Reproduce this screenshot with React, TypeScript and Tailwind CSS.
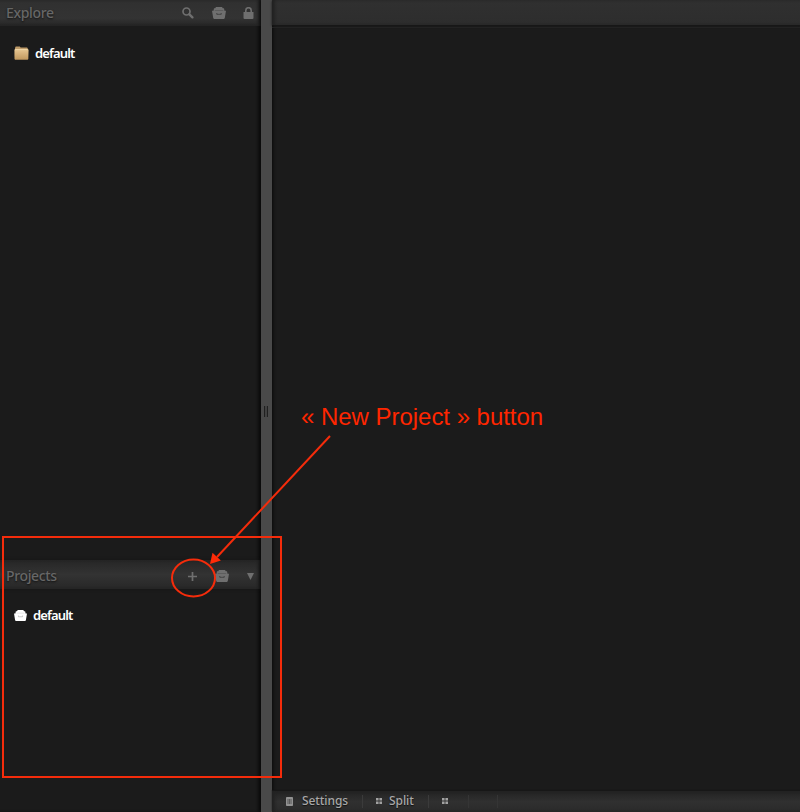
import React from 'react';

const ICON = '#6f6f6f';

function Basket({ color = ICON, line = '#303030', width = 14 }: { color?: string; line?: string; width?: number }) {
  return (
    <svg width={width} height={width * 12 / 14} viewBox="0 0 14 12" className="block shrink-0">
      <path d="M4 0h6l.8 1.3H12l.5 2.4H14L12.8 11l-.8 1H2l-.8-1L0 3.7h1.5L2 1.3h1.2z" fill={color} />
      <path d="M2.8 3.4h8.4" stroke={line} strokeWidth=".6" opacity=".5" />
      <path d="M4.8 6v1.3h4.4V6" stroke={line} strokeWidth=".9" fill="none" opacity=".75" />
    </svg>
  );
}

function Grid() {
  return (
    <svg width="6" height="6" viewBox="0 0 6 6" fill="#a2a2a2" className="block shrink-0">
      <path d="M0 0h2.6v2.6H0zM3.4 0H6v2.6H3.4zM0 3.4h2.6V6H0zM3.4 3.4H6V6H3.4z" />
    </svg>
  );
}

function Folder() {
  return (
    <svg width="15" height="14" viewBox="0 0 15 14" className="block shrink-0">
      <defs>
        <linearGradient id="folder" x1="0" y1="0" x2="0" y2="1">
          <stop offset="0" stopColor="#e8c792" />
          <stop offset="1" stopColor="#c1985e" />
        </linearGradient>
      </defs>
      <path d="M1 2.1 1.7.4h4.1l.8 1.1h6.5l.7 1v2H1z" fill="#bd9a68" />
      <path d="M.4 3.7 1.2 3h12.5l.9.7-.3 9.4-.6.6H1.1l-.6-.6z" fill="url(#folder)" />
      <path d="M1.2 3.6h12.4" stroke="#f4dcb2" strokeWidth=".7" />
    </svg>
  );
}

function Heading({ text, children, className }: { text: string; children: React.ReactNode; className: string }) {
  return (
    <header className={`flex shrink-0 items-center bg-linear-to-b pl-[6px] ${className}`}>
      <span className="w-[165px] text-[14px] font-medium leading-[20px] tracking-[-0.35px] text-[#676767] [text-shadow:0_1px_2px_#111]">{text}</span>
      {children}
    </header>
  );
}

export default function App() {
  return (
    <div className="relative flex h-[812px] w-[800px] overflow-hidden bg-[#1b1b1b] font-['Noto_Sans','Open_Sans',sans-serif]">
      <aside className="flex w-[261px] shrink-0 flex-col shadow-[inset_-3px_0_3px_#111]">
        <Heading text="Explore" className="h-[26px] from-[#303030] via-[#333] via-70% to-[#252525] shadow-[inset_-3px_0_3px_#222]">
          <svg width="12" height="12" viewBox="0 0 12 12" className="-mt-[1px] ml-[11px]" fill="none" stroke={ICON}>
            <circle cx="4.5" cy="4.5" r="3.5" strokeWidth="1.7" />
            <path d="m7.4 7.4 3 3" strokeWidth="2.3" strokeLinecap="round" />
          </svg>
          <span className="-mt-[1px] ml-[18px]"><Basket /></span>
          <svg width="11" height="13" viewBox="0 0 11 13" className="ml-[17px]">
            <path d="M2.8 6V3.4a2.7 2.7 0 0 1 5.4 0V6" fill="none" stroke={ICON} strokeWidth="1.6" />
            <path d="M.5 5h10v6q0 1-1.2 1H1.7Q.5 12 .5 11z" fill={ICON} />
          </svg>
        </Heading>
        <div className="flex h-[534px] items-start pl-[14px] pt-[20px]">
          <Folder />
          <span className="-mt-[3px] ml-[6px] text-[13px] font-semibold leading-[21px] tracking-[-0.85px] text-white">default</span>
        </div>
        <Heading text="Projects" className="h-[29px] from-[#262626] via-[#333] to-[#272727] pt-[3px] shadow-[inset_-3px_0_3px_#222,0_0_3px_#151515]">
          <svg width="9" height="9" viewBox="0 0 9 9" className="ml-[17px]">
            <path d="M4.5 0v9M0 4.5h9" stroke={ICON} strokeWidth="1.7" />
          </svg>
          <span className="ml-[18px]"><Basket /></span>
          <svg width="7" height="7" viewBox="0 0 7 7" className="ml-[18px]"><path d="M0 0h7L3.5 7z" fill={ICON} /></svg>
        </Heading>
        <div className="flex items-start pl-[14px] pt-[16px]">
          <span className="pt-[5px]"><Basket color="#fff" line="#aaa" width={13} /></span>
          <span className="ml-[6px] text-[13px] font-semibold leading-[21px] tracking-[-0.85px] text-white">default</span>
        </div>
      </aside>
      <div className="flex w-[11px] shrink-0 items-center justify-center bg-[#494949] pr-[1px] pt-[10px] shadow-[0_0_3px_1px_#090909]">
        <span className="h-[11px] w-[4px] border-x border-[#202020] bg-[#414141]" />
      </div>
      <main className="flex grow flex-col">
        <header className="h-[25px] bg-linear-to-b from-[#303030] to-[#2d2d2d] shadow-[inset_3px_0_3px_#222,0_1px_2px_#161616]" />
        <div className="mt-[2px] grow border-t border-[#222]" />
        <footer className="flex h-[21px] items-center bg-linear-to-b from-[#222] via-[#303030] to-[#2a2a2a] pb-[1px] pl-[14px] text-[12px] font-medium leading-[18px] tracking-[-0.08px] text-[#a8a8a8] shadow-[inset_3px_0_3px_#222,0_-1px_1px_#171717] [text-shadow:0_1px_1px_#111]">
          <svg width="7" height="9" viewBox="0 0 7 9" className="shrink-0">
            <rect width="7" height="9" rx=".8" fill="#929292" />
            <path d="M2 2v5M3.5 2v5M5 2v5" stroke="#4c4c4c" strokeWidth=".8" />
          </svg>
          <span className="ml-[9px] w-[60px]">Settings</span>
          <span className="h-[13px] w-px bg-[#3b3b3b]" />
          <span className="ml-[13px]"><Grid /></span>
          <span className="ml-[7px] w-[39px]">Split</span>
          <span className="h-[13px] w-px bg-[#3b3b3b]" />
          <span className="ml-[13px]"><Grid /></span>
          <span className="ml-[20px] h-[13px] w-px bg-[#353535]" />
          <span className="ml-[28px] h-[13px] w-px bg-[#353535]" />
        </footer>
      </main>
      <svg className="pointer-events-none absolute inset-0" width="800" height="812" fill="none" stroke="#f52c0b" strokeWidth="2">
        <rect x="3" y="537" width="278" height="240" />
        <ellipse cx="193.5" cy="578" rx="21.5" ry="18.5" />
        <path d="m330 436-113 121" />
        <path d="m210 564 2.5-11.2 8.4 7.8z" fill="#ff2b08" stroke="none" />
      </svg>
      <span className="absolute left-[301px] top-[403px] whitespace-nowrap font-['Liberation_Sans',sans-serif] text-[24px] leading-[28px] tracking-[-0.03px] text-[#ff2600]">« New Project » button</span>
    </div>
  );
}
